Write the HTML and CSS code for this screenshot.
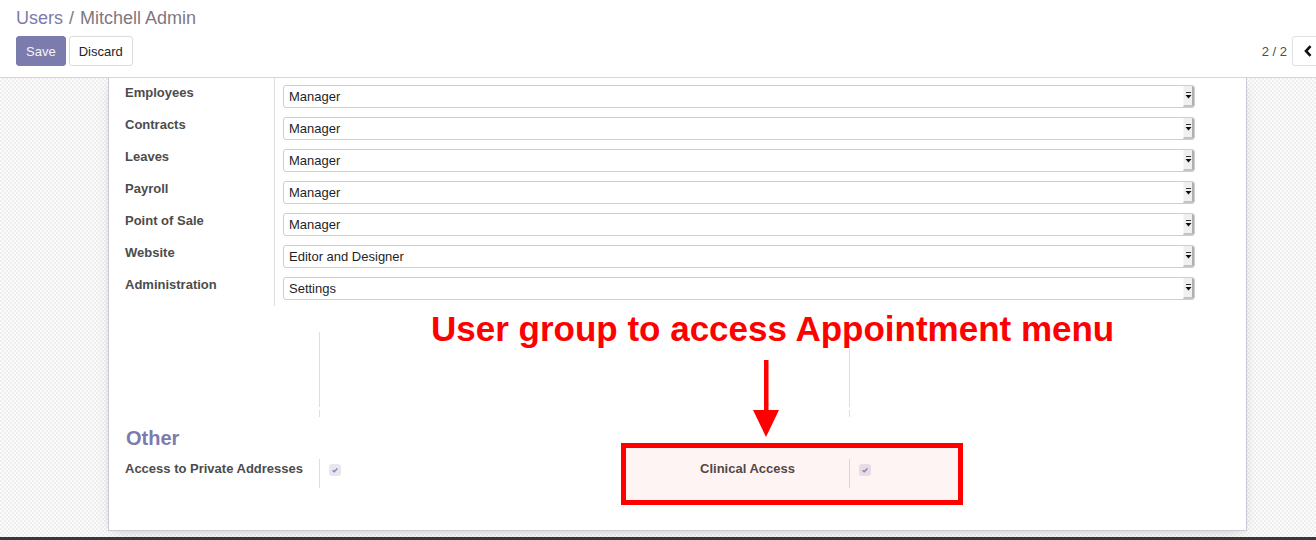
FILE: index.html
```html
<!DOCTYPE html>
<html lang="en">
<head>
<meta charset="utf-8">
<title>Users / Mitchell Admin</title>
<link rel="stylesheet" href="styles.css">
</head>
<body>
<div class="control-panel">
  <ol class="breadcrumb">
    <li class="crumb-link">Users</li>
    <li class="crumb-active"><span class="crumb-sep">/</span>Mitchell Admin</li>
  </ol>
  <div class="cp-bottom">
    <div class="cp-buttons">
      <button class="btn btn-primary">Save</button>
      <button class="btn btn-secondary">Discard</button>
    </div>
    <div class="pager">
      <span class="pager-value">2 / 2</span>
      <div class="pager-btns">
        <button class="btn pager-btn" aria-label="Previous"><svg width="8" height="12" viewBox="0 0 8 12"><path d="M6.5 1.2 L2 6 L6.5 10.8" fill="none" stroke="#111" stroke-width="2.6" stroke-linejoin="miter"/></svg></button>
        <button class="btn pager-btn" aria-label="Next"><svg width="8" height="12" viewBox="0 0 8 12"><path d="M1.5 1.2 L6 6 L1.5 10.8" fill="none" stroke="#111" stroke-width="2.6"/></svg></button>
      </div>
    </div>
  </div>
</div>

<div class="form-view">
  <div class="sheet">
    <div class="group-table">
      <div class="lbl">Employees</div>
      <div class="fld"><div class="select"><span class="select-text">Manager</span><span class="select-arrow"><svg width="7" height="8" viewBox="0 0 7 8"><rect x="1" y="0" width="5" height="1" fill="#333"/><path d="M0.5 3 H6.5 L3.5 6.5 Z" fill="#111"/></svg></span></div></div>
      <div class="lbl">Contracts</div>
      <div class="fld"><div class="select"><span class="select-text">Manager</span><span class="select-arrow"><svg width="7" height="8" viewBox="0 0 7 8"><rect x="1" y="0" width="5" height="1" fill="#333"/><path d="M0.5 3 H6.5 L3.5 6.5 Z" fill="#111"/></svg></span></div></div>
      <div class="lbl">Leaves</div>
      <div class="fld"><div class="select"><span class="select-text">Manager</span><span class="select-arrow"><svg width="7" height="8" viewBox="0 0 7 8"><rect x="1" y="0" width="5" height="1" fill="#333"/><path d="M0.5 3 H6.5 L3.5 6.5 Z" fill="#111"/></svg></span></div></div>
      <div class="lbl">Payroll</div>
      <div class="fld"><div class="select"><span class="select-text">Manager</span><span class="select-arrow"><svg width="7" height="8" viewBox="0 0 7 8"><rect x="1" y="0" width="5" height="1" fill="#333"/><path d="M0.5 3 H6.5 L3.5 6.5 Z" fill="#111"/></svg></span></div></div>
      <div class="lbl">Point of Sale</div>
      <div class="fld"><div class="select"><span class="select-text">Manager</span><span class="select-arrow"><svg width="7" height="8" viewBox="0 0 7 8"><rect x="1" y="0" width="5" height="1" fill="#333"/><path d="M0.5 3 H6.5 L3.5 6.5 Z" fill="#111"/></svg></span></div></div>
      <div class="lbl">Website</div>
      <div class="fld"><div class="select"><span class="select-text">Editor and Designer</span><span class="select-arrow"><svg width="7" height="8" viewBox="0 0 7 8"><rect x="1" y="0" width="5" height="1" fill="#333"/><path d="M0.5 3 H6.5 L3.5 6.5 Z" fill="#111"/></svg></span></div></div>
      <div class="lbl">Administration</div>
      <div class="fld last"><div class="select"><span class="select-text">Settings</span><span class="select-arrow"><svg width="7" height="8" viewBox="0 0 7 8"><rect x="1" y="0" width="5" height="1" fill="#333"/><path d="M0.5 3 H6.5 L3.5 6.5 Z" fill="#111"/></svg></span></div></div>
    </div>

    <div class="outer-group empty-groups">
      <div class="inner-group left">
        <div class="g-row tall"><div class="g-lbl"></div><div class="g-fld"></div></div>
        <div class="g-row short"><div class="g-lbl"></div><div class="g-fld"></div></div>
      </div>
      <div class="inner-group right">
        <div class="g-row tall"><div class="g-lbl"></div><div class="g-fld"></div></div>
        <div class="g-row short"><div class="g-lbl"></div><div class="g-fld"></div></div>
      </div>
    </div>

    <h2 class="separator-title">Other</h2>

    <div class="outer-group">
      <div class="inner-group left">
        <div class="g-row field-row">
          <label class="g-lbl">Access to Private Addresses</label>
          <div class="g-fld"><span class="checkbox"><svg width="12" height="12" viewBox="0 0 12 12"><path d="M3.6 6.2 L5.2 7.7 L8.4 4.4" fill="none" stroke="#8584b4" stroke-width="1.4"/></svg></span></div>
        </div>
      </div>
      <div class="inner-group right">
        <div class="g-row field-row">
          <label class="g-lbl centered">Clinical Access</label>
          <div class="g-fld"><span class="checkbox"><svg width="12" height="12" viewBox="0 0 12 12"><path d="M3.6 6.2 L5.2 7.7 L8.4 4.4" fill="none" stroke="#8584b4" stroke-width="1.4"/></svg></span></div>
        </div>
      </div>
    </div>
  </div>

  <div class="annotation-text">User group to access Appointment menu</div>
  <svg class="annotation-arrow" width="28" height="77" viewBox="0 0 28 77"><rect x="12" y="0" width="4.5" height="52" fill="#ff0000"/><path d="M1 50 H27 L14 77 Z" fill="#ff0000"/></svg>
  <div class="annotation-box"></div>
</div>
<div class="taskbar"></div>
</body>
</html>
```

FILE: styles.css
```css
* { box-sizing: border-box; }

html, body {
  margin: 0;
  padding: 0;
}

body {
  width: 1316px;
  height: 540px;
  overflow: hidden;
  font-family: "Liberation Sans", Arial, sans-serif;
  font-size: 13px;
  color: #4c4c4c;
  background: #fff;
}

/* ---------- control panel ---------- */
.control-panel {
  height: 78px;
  padding: 6px 16px 0 16px;
  border-bottom: 1px solid #d6d6d6;
  background: #fff;
  display: flex;
  flex-direction: column;
}

.breadcrumb {
  list-style: none;
  margin: 0;
  padding: 0;
  display: flex;
  font-size: 18px;
  line-height: 24px;
  height: 24px;
}

.crumb-link { color: #7c7bad; }
.crumb-active { color: #7f7780; }
.crumb-sep { margin: 0 6px; }

.cp-bottom {
  margin-top: 6px;
  display: flex;
  align-items: center;
}

.cp-buttons {
  display: flex;
  gap: 3px;
}

.btn {
  font-family: "Liberation Sans", Arial, sans-serif;
  font-size: 13px;
  height: 30px;
  padding: 1px 9px 0 9px;
  border-radius: 3px;
  border: 1px solid #dcdcdc;
  background: #fff;
  color: #212529;
  line-height: 27px;
  cursor: pointer;
}

.btn-primary {
  background: #7c7bad;
  border-color: #7c7bad;
  color: #f4f4f8;
}

.pager {
  margin-left: auto;
  margin-right: -53px;
  display: flex;
  align-items: center;
  gap: 5px;
}

.pager-value {
  color: #4c4c4c;
  font-size: 13px;
}

.pager-btns { display: flex; }

.pager-btn {
  width: 31px;
  padding: 0;
  display: flex;
  align-items: center;
  justify-content: center;
  border-color: #e0e0e0;
}
.pager-btn + .pager-btn { margin-left: -1px; }

/* ---------- form view ---------- */
.form-view {
  position: relative;
  height: 459px;
  overflow: hidden;
  background-color: #f6f6f6;
  background-image: repeating-conic-gradient(#efefef 0 25%, #fbfbfb 0 50%);
  background-size: 4px 4px;
}

.sheet {
  margin-left: 108px;
  width: 1139px;
  height: 453px;
  background: #fff;
  border: 1px solid #c9c9d3;
  border-top: none;
  box-shadow: 0 4px 14px -6px rgba(0, 0, 0, 0.25);
  padding: 0 16px;
}

.group-table {
  display: grid;
  grid-template-columns: 150px 1fr;
}

.lbl {
  border-right: 1px solid #dedede;
  padding-top: 6px;
  line-height: 18px;
  font-weight: bold;
  color: #4c4c4c;
}

.fld {
  padding: 7px 35px 2px 8px;
}
.fld.last { padding-bottom: 6px; }

.select {
  height: 23px;
  border: 1px solid #cfcfcf;
  border-radius: 3px;
  display: flex;
  align-items: stretch;
  background: #fff;
  overflow: hidden;
}

.select-text {
  flex: 1;
  padding-left: 5px;
  line-height: 21px;
  color: #1f1f1f;
}

.select-arrow {
  width: 11px;
  background: #f0f0f0;
  border-right: 2px solid #b0b0b0;
  border-bottom: 2px solid #c4c4c4;
  border-left: 1px solid #f7f7f7;
  display: flex;
  align-items: center;
  justify-content: center;
  padding-top: 1px;
}

/* outer/inner groups */
.outer-group {
  display: grid;
  grid-template-columns: 521px 1fr;
}

.empty-groups { margin-top: 26px; }

.g-row {
  display: grid;
}
.inner-group.left .g-row { grid-template-columns: 195px 1fr; }
.inner-group.right .g-row { grid-template-columns: 204px 1fr; }

.g-lbl {
  border-right: 1px solid #dedede;
  font-weight: bold;
  color: #4c4c4c;
  line-height: 18px;
}

.g-row.tall { height: 75px; }
.g-row.short { height: 7px; margin-top: 3px; }

.g-row.field-row { height: 29px; }
.g-row.field-row .g-lbl { padding-top: 1px; }

.g-lbl.centered { text-align: center; }

.g-fld {
  padding: 5px 0 0 9px;
}

.checkbox {
  display: block;
  width: 12px;
  height: 12px;
  border-radius: 3px;
  background: #e6e6ee;
}
.checkbox svg { display: block; }

.separator-title {
  margin: 9px 0 9px 1px;
  font-size: 20px;
  line-height: 24px;
  font-weight: bold;
  color: #7c7bad;
}

/* ---------- annotations (overlay) ---------- */
.annotation-text {
  position: absolute;
  left: 431px;
  top: 231px;
  font-family: "Liberation Sans", Arial, sans-serif;
  font-size: 35px;
  line-height: 40px;
  font-weight: bold;
  color: #ff0000;
  background: #fff;
  white-space: nowrap;
}

.annotation-arrow {
  position: absolute;
  left: 752px;
  top: 282px;
}

.annotation-box {
  position: absolute;
  left: 621px;
  top: 365px;
  width: 342px;
  height: 62px;
  border: 5px solid #ff0000;
  background: rgba(255, 0, 0, 0.045);
}

.taskbar {
  height: 3px;
  background: #383838;
}
```
